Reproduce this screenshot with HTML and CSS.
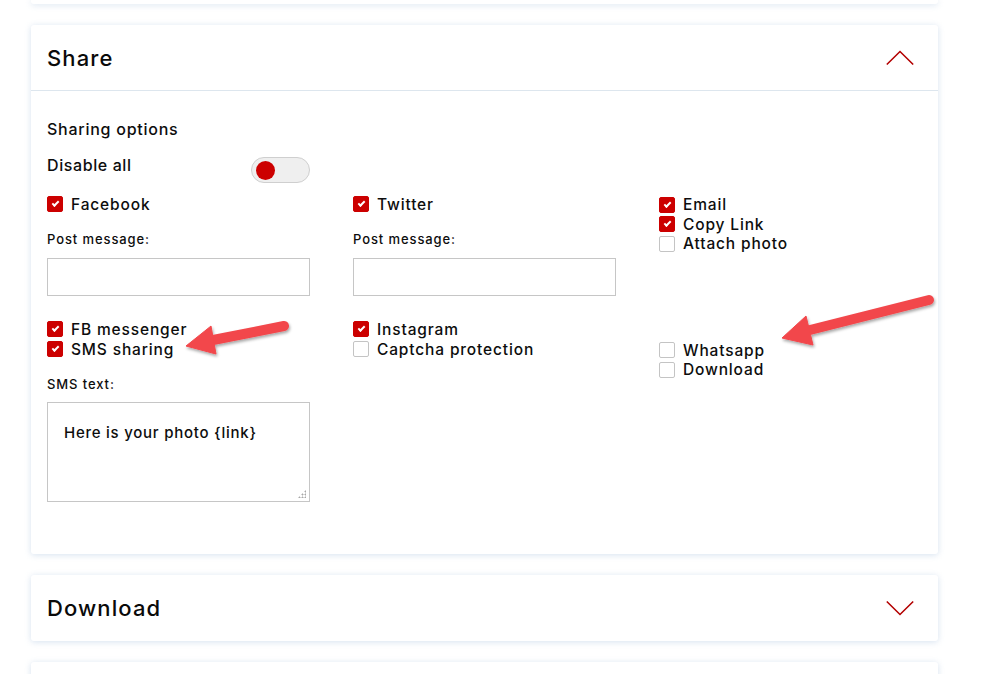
FILE: index.html
```html
<!DOCTYPE html>
<html>
<head>
<meta charset="utf-8">
<link rel="stylesheet" href="styles.css">
</head>
<body>
<div class="page">
  <div class="card card-top"></div>

  <section class="card">
    <header class="card-head bordered">
      <h2 class="card-title">Share</h2>
      <svg class="chev" width="28" height="16" viewBox="0 0 28 16"><polyline points="0.8,14.5 14,1.5 27.2,14.5" fill="none" stroke="#b30000" stroke-width="1.6"/></svg>
    </header>
    <div class="card-body">
      <div class="sub-title">Sharing options</div>
      <div class="toggle-row">
        <span class="toggle-label">Disable all</span>
        <span class="toggle"><span class="knob"></span></span>
      </div>
      <div class="grid">
        <div class="group">
          <div class="check"><span class="box on"></span>Facebook</div>
          <div class="field-label">Post message:</div>
          <div class="input"></div>
        </div>
        <div class="group">
          <div class="check"><span class="box on"></span>Twitter</div>
          <div class="field-label">Post message:</div>
          <div class="input"></div>
        </div>
        <div class="group tight">
          <div class="check"><span class="box on"></span>Email</div>
          <div class="check"><span class="box on"></span>Copy Link</div>
          <div class="check"><span class="box"></span>Attach photo</div>
        </div>
        <div class="group">
          <div class="check"><span class="box on"></span>FB messenger</div>
          <div class="check"><span class="box on"></span>SMS sharing</div>
          <div class="field-label">SMS text:</div>
          <div class="textarea">Here is your photo {link}<span class="grip"></span></div>
        </div>
        <div class="group">
          <div class="check"><span class="box on"></span>Instagram</div>
          <div class="check"><span class="box"></span>Captcha protection</div>
        </div>
        <div class="group tight offset">
          <div class="check"><span class="box"></span>Whatsapp</div>
          <div class="check"><span class="box"></span>Download</div>
        </div>
      </div>
    </div>
  </section>

  <section class="card">
    <header class="card-head">
      <h2 class="card-title">Download</h2>
      <svg class="chev" width="28" height="16" viewBox="0 0 28 16"><polyline points="0.8,1.5 14,14.5 27.2,1.5" fill="none" stroke="#b30000" stroke-width="1.6"/></svg>
    </header>
  </section>

  <div class="card card-bottom"></div>
</div>

<svg class="arrows" width="984" height="674" viewBox="0 0 984 674">
  <defs>
    <filter id="sh" x="-20%" y="-50%" width="140%" height="200%">
      <feDropShadow dx="1" dy="2" stdDeviation="1.6" flood-color="#000" flood-opacity="0.35"/>
    </filter>
  </defs>
  <g filter="url(#sh)" fill="#f2474b" stroke="#f2474b">
    <line x1="284" y1="326" x2="208" y2="341" stroke-width="10" stroke-linecap="round"/>
    <polygon points="186,346 211,326 216,354" stroke-width="1" stroke-linejoin="round"/>
    <line x1="929" y1="300" x2="806" y2="331" stroke-width="10" stroke-linecap="round"/>
    <polygon points="782,338 806,316 813,345" stroke-width="1" stroke-linejoin="round"/>
  </g>
</svg>
</body>
</html>
```

FILE: styles.css
```css
html, body {
  margin: 0;
  padding: 0;
  background: #ffffff;
}

body {
  position: relative;
  width: 984px;
  height: 674px;
  overflow: hidden;
  font-family: Inter, "Noto Sans", "DejaVu Sans", sans-serif;
  color: #0d0d0d;
  font-weight: 500;
}

.page {
  display: flex;
  flex-direction: column;
  gap: 21px;
  padding: 0 46px 0 31px;
}

.card {
  background: #ffffff;
  border-radius: 3px;
  box-shadow: 0 1px 6px rgba(165, 190, 220, 0.45);
}

.card-top {
  height: 4px;
  border-radius: 0 0 3px 3px;
}

.card-bottom {
  height: 30px;
}

.card-head {
  height: 66px;
  box-sizing: border-box;
  display: flex;
  align-items: center;
  justify-content: space-between;
  padding: 0 24px 0 16px;
}

.card-head.bordered {
  border-bottom: 1px solid #dde6ee;
}

.card-title {
  margin: 0;
  font-size: 22px;
  font-weight: 500;
  letter-spacing: 1.1px;
  color: #0a0a0a;
}

.chev {
  display: block;
}

.card-body {
  padding: 28px 16px 52px;
}

.sub-title {
  font-size: 16px;
  line-height: 20px;
  letter-spacing: 0.75px;
}

.toggle-row {
  display: flex;
  margin-top: 16px;
}

.toggle-label {
  width: 204px;
  font-size: 16px;
  line-height: 20px;
  letter-spacing: 0.6px;
}

.toggle {
  margin-top: 2px;
  width: 59px;
  height: 26px;
  box-sizing: border-box;
  border: 1px solid #cfcfcf;
  border-radius: 13px;
  background: #efefef;
  display: flex;
  align-items: center;
  padding-left: 4px;
}

.knob {
  width: 19px;
  height: 19px;
  border-radius: 50%;
  background: #cc0000;
}

.grid {
  margin-top: 11px;
  display: grid;
  grid-template-columns: 263px 263px 263px;
  column-gap: 43px;
  row-gap: 23px;
}

.group {
  display: flex;
  flex-direction: column;
}

.group.offset {
  padding-top: 20.5px;
}

.check {
  display: flex;
  align-items: center;
  gap: 8px;
  height: 20px;
  font-size: 15.5px;
  letter-spacing: 0.85px;
  white-space: nowrap;
}

.tight .check {
  height: 19.5px;
}

.tight .check:first-child {
  height: 20.5px;
  padding-top: 1px;
  box-sizing: border-box;
}

.box {
  position: relative;
  flex: none;
  width: 16px;
  height: 16px;
  box-sizing: border-box;
  border: 1px solid #c4c4c4;
  border-radius: 2px;
  background: #ffffff;
}

.box.on {
  background: #cc0000;
  border-color: #cc0000;
}

.box.on::after {
  content: "";
  position: absolute;
  left: 4px;
  top: 4px;
  width: 5px;
  height: 2px;
  border-left: 2px solid #ffffff;
  border-bottom: 2px solid #ffffff;
  transform: rotate(-45deg);
}

.field-label {
  margin-top: 15px;
  font-size: 13px;
  line-height: 20px;
  letter-spacing: 0.9px;
}

.input {
  margin-top: 9px;
  height: 38px;
  box-sizing: border-box;
  border: 1px solid #c6c6c6;
  background: #ffffff;
}

.textarea {
  position: relative;
  margin-top: 8px;
  height: 100px;
  box-sizing: border-box;
  border: 1px solid #c6c6c6;
  padding: 20px 16px;
  font-size: 15px;
  line-height: 20px;
  letter-spacing: 0.75px;
}

.grip {
  position: absolute;
  right: 3px;
  bottom: 3px;
  width: 8px;
  height: 8px;
  background:
    radial-gradient(circle, #a8a8a8 0.9px, transparent 1.1px) 6px 0 / 3px 3px no-repeat,
    radial-gradient(circle, #a8a8a8 0.9px, transparent 1.1px) 3px 3px / 3px 3px no-repeat,
    radial-gradient(circle, #a8a8a8 0.9px, transparent 1.1px) 6px 3px / 3px 3px no-repeat,
    radial-gradient(circle, #a8a8a8 0.9px, transparent 1.1px) 0 6px / 3px 3px no-repeat,
    radial-gradient(circle, #a8a8a8 0.9px, transparent 1.1px) 3px 6px / 3px 3px no-repeat,
    radial-gradient(circle, #a8a8a8 0.9px, transparent 1.1px) 6px 6px / 3px 3px no-repeat;
}

.arrows {
  position: absolute;
  left: 0;
  top: 0;
  pointer-events: none;
}
```
